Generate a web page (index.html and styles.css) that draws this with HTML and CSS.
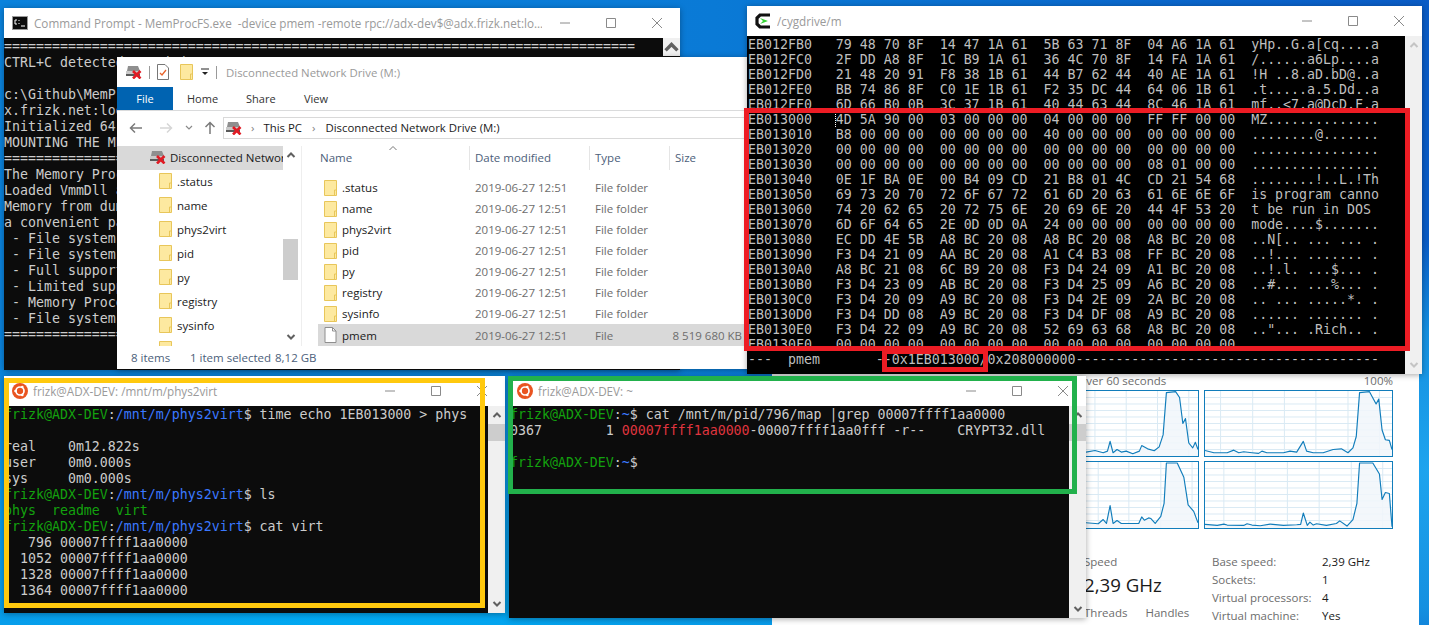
FILE: index.html
```html
<!DOCTYPE html>
<html lang="en">
<head>
<meta charset="utf-8">
<title>MemProcFS desktop</title>
<link rel="stylesheet" href="styles.css">
</head>
<body>
<svg class="defs" width="0" height="0" aria-hidden="true">
  <symbol id="i-min" viewBox="0 0 12 12"><path d="M1 6h10" stroke="#8a8a8a" fill="none"/></symbol>
  <symbol id="i-max" viewBox="0 0 12 12"><path d="M1.5 1.5h9v9h-9z" stroke="#8a8a8a" fill="none"/></symbol>
  <symbol id="i-close" viewBox="0 0 12 12"><path d="M1 1l10 10M11 1L1 11" stroke="#8a8a8a" fill="none"/></symbol>
  <symbol id="i-up" viewBox="0 0 10 8"><path d="M1.5 6L5 2.5 8.5 6" stroke="currentColor" stroke-width="2" fill="none"/></symbol>
  <symbol id="i-down" viewBox="0 0 10 8"><path d="M1.5 2L5 5.5 8.5 2" stroke="currentColor" stroke-width="2" fill="none"/></symbol>
  <symbol id="i-folder" viewBox="0 0 13 16"><path d="M.5.5h12v15H.5z" fill="#fde9a0" stroke="#e8c65a"/><path d="M10.5 15V10h2" fill="none" stroke="#e8c65a"/></symbol>
  <symbol id="i-file" viewBox="0 0 12 16"><path d="M.5.5h7.5l3.500 3.500v11.500H.5z" fill="#fff" stroke="#8e8e8e"/><path d="M8 .5V4h3.500" fill="none" stroke="#8e8e8e"/></symbol>
  <symbol id="i-drive" viewBox="0 0 16 14"><path d="M2 1h10l2 5H1z" fill="#8f8f8f"/><path d="M0 6h14v5H0z" fill="#c9c9c9"/><path d="M0 9h14v2H0z" fill="#5a5a5a"/><path d="M7 6l7.500 7.500M14.500 6L7 13.500" stroke="#e01b24" stroke-width="2.600" fill="none"/></symbol>
  <symbol id="i-ubuntu" viewBox="0 0 16 16"><circle cx="8" cy="8" r="8" fill="#e95420"/><circle cx="8" cy="8" r="4" fill="none" stroke="#fff" stroke-width="1.700"/><circle cx="3.500" cy="8" r="1.300" fill="#fff"/><circle cx="10.300" cy="4" r="1.300" fill="#fff"/><circle cx="10.300" cy="12" r="1.300" fill="#fff"/></symbol>
</svg>

<main class="desktop">

  <section class="win taskmgr">
    <div class="tm-head"><span>% Utilization over 60 seconds</span><span>100%</span></div>
    <div class="tm-charts">
      <svg class="chart" viewBox="-180 60 568 200" preserveAspectRatio="none">
        <path class="grid" d="M-180 80H388M-180 100H388M-180 120H388M-180 140H388M-180 160H388M-180 180H388M-180 200H388M-180 220H388M-180 240H388M75 60V260M170 60V260M265 60V260M360 60V260"/>
        <path class="fill" d="M-180 260V248L48 248 75 243 100 250 113 245 121 215 130 250 142 240 155 248 170 245 190 253 210 245 217 228 235 238 255 244 270 232 282 195 292 65 320 62 332 80 342 160 350 145 360 220 372 235 380 218 388 240V260Z"/>
        <path class="line" d="M-180 248L48 248 75 243 100 250 113 245 121 215 130 250 142 240 155 248 170 245 190 253 210 245 217 228 235 238 255 244 270 232 282 195 292 65 320 62 332 80 342 160 350 145 360 220 372 235 380 218 388 240"/>
      </svg>
      <svg class="chart" viewBox="403 60 565 200" preserveAspectRatio="none">
        <path class="grid" d="M403 80H968M403 100H968M403 120H968M403 140H968M403 160H968M403 180H968M403 200H968M403 220H968M403 240H968M450 60V260M547 60V260M643 60V260M738 60V260M835 60V260M930 60V260"/>
        <path class="fill" d="M403 260V243L430 250 470 250 490 242 505 250 520 247 545 250 565 252 575 245 590 250 640 250 660 245 680 248 700 215 710 245 730 250 760 250 790 240 815 238 835 250 850 235 860 200 870 65 900 62 920 100 928 85 938 180 948 210 960 212 968 240V260Z"/>
        <path class="line" d="M403 243L430 250 470 250 490 242 505 250 520 247 545 250 565 252 575 245 590 250 640 250 660 245 680 248 700 215 710 245 730 250 760 250 790 240 815 238 835 250 850 235 860 200 870 65 900 62 920 100 928 85 938 180 948 210 960 212 968 240"/>
      </svg>
      <svg class="chart chart-tall" viewBox="-180 273 568 203" preserveAspectRatio="none">
        <path class="grid" d="M-180 293H388M-180 313H388M-180 333H388M-180 353H388M-180 373H388M-180 393H388M-180 413H388M-180 433H388M-180 453H388M85 273V476M178 273V476M275 273V476M370 273V476"/>
        <path class="fill" d="M-180 476V460L48 460 85 463 100 450 110 462 121 407 130 462 142 453 155 462 208 462 217 442 225 452 238 445 245 447 258 462 275 440 285 400 292 276 325 276 345 320 358 405 375 425 388 460V476Z"/>
        <path class="line" d="M-180 460L48 460 85 463 100 450 110 462 121 407 130 462 142 453 155 462 208 462 217 442 225 452 238 445 245 447 258 462 275 440 285 400 292 276 325 276 345 320 358 405 375 425 388 460"/>
      </svg>
      <svg class="chart chart-tall" viewBox="403 273 565 203" preserveAspectRatio="none">
        <path class="grid" d="M403 293H968M403 313H968M403 333H968M403 353H968M403 373H968M403 393H968M403 413H968M403 433H968M403 453H968M460 273V476M555 273V476M652 273V476M748 273V476M845 273V476M940 273V476"/>
        <path class="fill" d="M403 476V465L440 468 460 464 470 467 520 468 530 463 545 467 570 469 600 464 640 468 680 466 692 465 700 430 712 468 720 458 730 467 740 463 770 468 800 462 810 454 832 470 850 450 862 400 870 276 910 276 930 310 938 388 948 367 960 370 968 472V476Z"/>
        <path class="line" d="M403 465L440 468 460 464 470 467 520 468 530 463 545 467 570 469 600 464 640 468 680 466 692 465 700 430 712 468 720 458 730 467 740 463 770 468 800 462 810 454 832 470 850 450 862 400 870 276 910 276 930 310 938 388 948 367 960 370 968 472"/>
      </svg>
    </div>
    <div class="tm-stats">
      <div class="tm-live">
        <div class="muted">Speed</div>
        <div class="tm-big">2,39 GHz</div>
        <div class="tm-pair muted"><span>Threads</span><span>Handles</span></div>
      </div>
      <dl class="tm-spec">
        <dt>Base speed:</dt><dd>2,39 GHz</dd>
        <dt>Sockets:</dt><dd>1</dd>
        <dt>Virtual processors:</dt><dd>4</dd>
        <dt>Virtual machine:</dt><dd>Yes</dd>
      </dl>
    </div>
  </section>

  <section class="win cmd">
    <header class="titlebar">
      <svg class="ticon" viewBox="0 0 16 14"><rect x=".5" y=".5" width="15" height="13" fill="#0c0c0c" stroke="#9a9a9a"/><path d="M3 4h2M3 4v4h2M7 4v1M7 7v1M9 10h4" stroke="#fff" fill="none"/></svg>
      <span class="ttitle">Command Prompt - MemProcFS.exe  -device pmem -remote rpc://adx-dev$@adx.frizk.net:lo...</span>
      <div class="controls">
        <svg><use href="#i-min"/></svg><svg><use href="#i-max"/></svg><svg><use href="#i-close"/></svg>
      </div>
    </header>
    <div class="termwrap">
<pre class="term cmd-text">===============================================================================
CTRL+C detected - exiting ...

c:\Github\MemProcFS\MemProcFS.exe -device pmem -remote rpc://adx-dev$@ad
x.frizk.net:logon
Initialized 64-bit Windows 10.0.17763
MOUNTING THE MEMORY AS M:
===============================================================================
The Memory Process File System
Loaded VmmDll and LeechCore
Memory from dump files or live
a convenient pattern
 - File system A
 - File system B
 - Full support
 - Limited support
 - Memory Process
 - File system C
===============================================================================</pre>
      <div class="sb sb-dark"><svg class="sb-arrow"><use href="#i-up"/></svg></div>
    </div>
  </section>

  <section class="win explorer">
    <header class="ex-title">
      <svg class="ex-drive"><use href="#i-drive"/></svg>
      <span class="ex-sep"></span>
      <svg class="ex-check" viewBox="0 0 12 16"><path d="M.5.5h7.500l3.500 3.500v11.500H.5z" fill="#fff" stroke="#777"/><path d="M3 9l2 2 4-5" stroke="#e8632a" stroke-width="1.300" fill="none"/></svg>
      <svg class="ex-qfolder"><use href="#i-folder"/></svg>
      <svg class="ex-drop" viewBox="0 0 8 8"><path d="M0 1h8" stroke="#222"/><path d="M1 4h6L4 7z" fill="#222"/></svg>
      <span class="ex-sep"></span>
      <span class="ex-name">Disconnected Network Drive (M:)</span>
    </header>
    <nav class="tabs">
      <span class="tab-file">File</span><span>Home</span><span>Share</span><span>View</span>
    </nav>
    <div class="addr">
      <svg class="nav-ico" viewBox="0 0 14 12"><path d="M13 6H2M6 1.500L1.500 6 6 10.500" stroke="#7a7a7a" stroke-width="1.500" fill="none"/></svg>
      <svg class="nav-ico" viewBox="0 0 14 12"><path d="M1 6h11M8 1.500L12.500 6 8 10.500" stroke="#d6d6d6" stroke-width="1.500" fill="none"/></svg>
      <svg class="nav-caret" viewBox="0 0 8 5"><path d="M1 1l3 3 3-3" stroke="#8a8a8a" stroke-width="1.200" fill="none"/></svg>
      <svg class="nav-ico nav-up" viewBox="0 0 12 14"><path d="M6 13V2M1.500 6L6 1.500 10.500 6" stroke="#7a7a7a" stroke-width="1.500" fill="none"/></svg>
      <div class="addr-box">
        <svg class="addr-drive"><use href="#i-drive"/></svg>
        <span class="chev">›</span><span>This PC</span><span class="chev chev-b">›</span><span>Disconnected Network Drive (M:)</span>
      </div>
    </div>
    <div class="ex-body">
      <div class="navpane">
        <div class="nav-row nav-root"><svg class="addr-drive"><use href="#i-drive"/></svg><span>Disconnected Network Drive (M:)</span></div>
        <div class="nav-row"><svg class="fld"><use href="#i-folder"/></svg><span>.status</span></div>
        <div class="nav-row"><svg class="fld"><use href="#i-folder"/></svg><span>name</span></div>
        <div class="nav-row"><svg class="fld"><use href="#i-folder"/></svg><span>phys2virt</span></div>
        <div class="nav-row"><svg class="fld"><use href="#i-folder"/></svg><span>pid</span></div>
        <div class="nav-row"><svg class="fld"><use href="#i-folder"/></svg><span>py</span></div>
        <div class="nav-row"><svg class="fld"><use href="#i-folder"/></svg><span>registry</span></div>
        <div class="nav-row"><svg class="fld"><use href="#i-folder"/></svg><span>sysinfo</span></div>
        <div class="nav-row"><svg class="fld"><use href="#i-folder"/></svg><span>shared folder</span></div>
      </div>
      <div class="sb sb-nav">
        <svg class="sb-arrow sb-arrow-dark"><use href="#i-up"/></svg>
        <div class="sb-track"><div class="sb-thumb"></div></div>
        <svg class="sb-arrow sb-arrow-dark"><use href="#i-down"/></svg>
      </div>
      <div class="list">
        <div class="list-head">
          <span class="lh-name">Name<svg class="sort" viewBox="0 0 8 4"><path d="M.5 4L4 .5 7.500 4" stroke="#777" fill="none"/></svg></span>
          <span class="lh-cell">Date modified</span><span class="lh-cell">Type</span><span class="lh-cell">Size</span>
        </div>
        <div class="row"><span class="r-name"><svg class="fld"><use href="#i-folder"/></svg>.status</span><span>2019-06-27 12:51</span><span>File folder</span><span></span></div>
        <div class="row"><span class="r-name"><svg class="fld"><use href="#i-folder"/></svg>name</span><span>2019-06-27 12:51</span><span>File folder</span><span></span></div>
        <div class="row"><span class="r-name"><svg class="fld"><use href="#i-folder"/></svg>phys2virt</span><span>2019-06-27 12:51</span><span>File folder</span><span></span></div>
        <div class="row"><span class="r-name"><svg class="fld"><use href="#i-folder"/></svg>pid</span><span>2019-06-27 12:51</span><span>File folder</span><span></span></div>
        <div class="row"><span class="r-name"><svg class="fld"><use href="#i-folder"/></svg>py</span><span>2019-06-27 12:51</span><span>File folder</span><span></span></div>
        <div class="row"><span class="r-name"><svg class="fld"><use href="#i-folder"/></svg>registry</span><span>2019-06-27 12:51</span><span>File folder</span><span></span></div>
        <div class="row"><span class="r-name"><svg class="fld"><use href="#i-folder"/></svg>sysinfo</span><span>2019-06-27 12:51</span><span>File folder</span><span></span></div>
        <div class="row row-sel"><span class="r-name"><svg class="fld"><use href="#i-file"/></svg>pmem</span><span>2019-06-27 12:51</span><span>File</span><span class="r-size">8 519 680 KB</span></div>
      </div>
    </div>
    <footer class="ex-status">
      <span class="st-a">8 items</span><span class="st-b">1 item selected</span><span class="st-c">8,12 GB</span>
    </footer>
  </section>

  <section class="win cyg">
    <header class="titlebar">
      <svg class="ticon cyg-ico" viewBox="0 0 16 16"><path d="M15 2H5L2 5v6l3 3h10" fill="none" stroke="#111" stroke-width="3.200"/><path d="M5 5l8 3-8 3 3-3z" fill="#35d435"/></svg>
      <span class="ttitle">/cygdrive/m</span>
      <div class="controls">
        <svg><use href="#i-min"/></svg><svg><use href="#i-max"/></svg><svg><use href="#i-close"/></svg>
      </div>
    </header>
    <div class="termwrap">
<pre class="hex">EB012FB0   79 48 70 8F  14 47 1A 61  5B 63 71 8F  04 A6 1A 61  yHp..G.a[cq....a
EB012FC0   2F DD A8 8F  1C B9 1A 61  36 4C 70 8F  14 FA 1A 61  /......a6Lp....a
EB012FD0   21 48 20 91  F8 38 1B 61  44 B7 62 44  40 AE 1A 61  !H ..8.aD.bD@..a
EB012FE0   BB 74 86 8F  C0 1E 1B 61  F2 35 DC 44  64 06 1B 61  .t.....a.5.Dd..a
EB012FF0   6D 66 B0 0B  3C 37 1B 61  40 44 63 44  8C 46 1A 61  mf..&lt;7.a@DcD.F.a
EB013000   <span class="cursor">4</span>D 5A 90 00  03 00 00 00  04 00 00 00  FF FF 00 00  MZ..............
EB013010   B8 00 00 00  00 00 00 00  40 00 00 00  00 00 00 00  ........@.......
EB013020   00 00 00 00  00 00 00 00  00 00 00 00  00 00 00 00  ................
EB013030   00 00 00 00  00 00 00 00  00 00 00 00  08 01 00 00  ................
EB013040   0E 1F BA 0E  00 B4 09 CD  21 B8 01 4C  CD 21 54 68  ........!..L.!Th
EB013050   69 73 20 70  72 6F 67 72  61 6D 20 63  61 6E 6E 6F  is program canno
EB013060   74 20 62 65  20 72 75 6E  20 69 6E 20  44 4F 53 20  t be run in DOS 
EB013070   6D 6F 64 65  2E 0D 0D 0A  24 00 00 00  00 00 00 00  mode....$.......
EB013080   EC DD 4E 5B  A8 BC 20 08  A8 BC 20 08  A8 BC 20 08  ..N[.. ... ... .
EB013090   F3 D4 21 09  AA BC 20 08  A1 C4 B3 08  FF BC 20 08  ..!... ....... .
EB0130A0   A8 BC 21 08  6C B9 20 08  F3 D4 24 09  A1 BC 20 08  ..!.l. ...$... .
EB0130B0   F3 D4 23 09  AB BC 20 08  F3 D4 25 09  A6 BC 20 08  ..#... ...%... .
EB0130C0   F3 D4 20 09  A9 BC 20 08  F3 D4 2E 09  2A BC 20 08  .. ... .....*. .
EB0130D0   F3 D4 DD 08  A9 BC 20 08  F3 D4 DF 08  A9 BC 20 08  ...... ....... .
EB0130E0   F3 D4 22 09  A9 BC 20 08  52 69 63 68  A8 BC 20 08  .."... .Rich.. .
EB0130F0   00 00 00 00  00 00 00 00  00 00 00 00  00 00 00 00  
---  pmem       --0x1EB013000/0x208000000--------------------------------------</pre>
      <div class="sb sb-light">
        <svg class="sb-arrow sb-arrow-pale"><use href="#i-up"/></svg>
        <div class="sb-track"></div>
        <svg class="sb-arrow sb-arrow-pale"><use href="#i-down"/></svg>
      </div>
    </div>
    <div class="frame frame-red-main"></div>
    <div class="frame frame-red-small"></div>
  </section>

  <section class="win ubu-a">
    <header class="titlebar">
      <svg class="ticon-u"><use href="#i-ubuntu"/></svg>
      <span class="ttitle">frizk@ADX-DEV: /mnt/m/phys2virt</span>
      <div class="controls">
        <svg><use href="#i-min"/></svg><svg><use href="#i-max"/></svg><svg><use href="#i-close"/></svg>
      </div>
    </header>
    <div class="termwrap">
<pre class="term"><span class="g">frizk@ADX-DEV</span>:<span class="b">/mnt/m/phys2virt</span>$ time echo 1EB013000 &gt; phys

real    0m12.822s
user    0m0.000s
sys     0m0.000s
<span class="g">frizk@ADX-DEV</span>:<span class="b">/mnt/m/phys2virt</span>$ ls
<span class="g">phys  readme  virt</span>
<span class="g">frizk@ADX-DEV</span>:<span class="b">/mnt/m/phys2virt</span>$ cat virt
   796 00007ffff1aa0000
  1052 00007ffff1aa0000
  1328 00007ffff1aa0000
  1364 00007ffff1aa0000</pre>
      <div class="sb sb-term">
        <svg class="sb-arrow sb-arrow-dark"><use href="#i-up"/></svg>
        <div class="sb-track"><div class="sb-thumb-top"></div></div>
        <svg class="sb-arrow sb-arrow-dark"><use href="#i-down"/></svg>
      </div>
    </div>
    <div class="frame frame-yellow"></div>
  </section>

  <section class="win ubu-b">
    <header class="titlebar">
      <svg class="ticon-u"><use href="#i-ubuntu"/></svg>
      <span class="ttitle">frizk@ADX-DEV: ~</span>
      <div class="controls">
        <svg><use href="#i-min"/></svg><svg><use href="#i-max"/></svg><svg><use href="#i-close"/></svg>
      </div>
    </header>
    <div class="termwrap">
<pre class="term term-b"><span class="g">frizk@ADX-DEV</span>:<span class="b">~</span>$ cat /mnt/m/pid/796/map |grep 00007ffff1aa0000
0367        1 <span class="r">00007ffff1aa0000</span>-00007ffff1aa0fff -r--    CRYPT32.dll

<span class="g">frizk@ADX-DEV</span>:<span class="b">~</span>$</pre>
      <div class="sb sb-term">
        <svg class="sb-arrow sb-arrow-dark"><use href="#i-up"/></svg>
        <div class="sb-track"><div class="sb-thumb-top"></div></div>
        <svg class="sb-arrow sb-arrow-dark"><use href="#i-down"/></svg>
      </div>
    </div>
    <div class="frame frame-green"></div>
  </section>

</main>
</body>
</html>
```

FILE: styles.css
```css
* { box-sizing: border-box; }
html, body { margin: 0; padding: 0; height: 100%; overflow: hidden; }
body { font-family: "Open Sans", "Noto Sans", sans-serif; font-size: 11.5px; }
.defs { position: absolute; }

.desktop {
  position: relative;
  width: 1429px;
  height: 625px;
  overflow: hidden;
  background:
    radial-gradient(ellipse 900px 320px at 350px 640px, #00aaf2 0%, #0a98e8 55%, rgba(10,130,224,0) 100%),
    radial-gradient(ellipse 200px 230px at 1429px 470px, #1ea4ee 0%, #1590e0 60%, rgba(21,144,224,0) 100%),
    linear-gradient(90deg, #0a82dc 0%, #0a7ad6 50%, #0a5cc6 100%);
}

.win {
  position: absolute;
  display: flex;
  flex-direction: column;
  background: #fff;
  box-shadow: 0 1px 6px rgba(0, 0, 0, .35);
}

.titlebar {
  flex: 0 0 30px;
  height: 30px;
  display: flex;
  align-items: center;
  color: #9a9a9a;
  font-size: 11.7px;
  white-space: pre;
}
.ticon { width: 16px; height: 14px; margin: 0 6px 0 8px; flex: none; }
.ticon-u { width: 16px; height: 16px; margin: 0 5px 0 8px; flex: none; }
.cyg-ico { height: 16px; }
.ttitle { flex: 1; overflow: hidden; }
.controls { display: flex; flex: none; }
.controls svg { width: 46px; height: 12px; }

.termwrap { flex: 1; display: flex; min-height: 0; }
.term, .hex {
  flex: 1;
  margin: 0;
  min-width: 0;
  overflow: hidden;
  background: #0c0c0c;
  color: #cccccc;
  font-family: "DejaVu Sans Mono", "Liberation Mono", monospace;
  font-size: 13.28px;
  line-height: 16px;
  padding-top: 1px;
}
.hex { background: #000; color: #bfbfbf; line-height: 15px; padding: 1px 0 0 1px; }
.term-b { padding-left: 1px; }
.cursor { border-left: 1px dotted #fff; margin-left: -1px; }
.g { color: #13a10e; }
.b { color: #3b78ff; }
.r { color: #e0353f; }

.sb { flex: 0 0 17px; width: 17px; display: flex; flex-direction: column; align-items: center; background: #f0f0f0; }
.sb-dark { background: #0c0c0c; border-left: 0; }
.sb-dark .sb-arrow { background: #f0f0f0; width: 17px; height: 18px; color: #606060; margin: 0; }
.sb-arrow { flex: none; width: 10px; height: 8px; margin: 5px 0; color: #606060; }
.sb-arrow-dark { color: #606060; }
.sb-arrow-pale { color: #c4c4c4; }
.sb-track { flex: 1; width: 100%; }
.sb-thumb { margin-top: 75px; height: 41px; background: #cdcdcd; }
.sb-thumb-top { height: 17px; background: #cdcdcd; }

.frame { position: absolute; pointer-events: none; border-style: solid; border-width: 5px; }
.frame-red-main { left: -3px; top: 102px; width: 666px; height: 243px; border-color: #ed1c24; }
.frame-red-small { left: 135px; top: 343px; width: 106px; height: 23px; border-color: #ed1c24; }
.frame-yellow { left: 0; top: 2px; width: 481px; height: 230px; border-color: #ffc90e; }
.frame-green { left: -1px; top: 0; width: 569px; height: 118px; border-color: #22b14c; }

/* windows on the desktop */
.taskmgr { left: 772px; top: 372px; width: 647px; height: 260px; box-shadow: none; padding-left: 238px; color: #1a1a1a; }
.cmd { left: 4px; top: 8px; width: 676px; height: 362px; }
.explorer { left: 117px; top: 57px; width: 636px; height: 312px; }
.cyg { left: 747px; top: 6px; width: 675px; height: 368px; }
.ubu-a { left: 4px; top: 376px; width: 501px; height: 237px; }
.ubu-b { left: 509px; top: 376px; width: 577px; height: 242px; }

/* task manager */
.tm-head { display: flex; justify-content: space-between; width: 383px; height: 18px; line-height: 18px; color: #6d6d6d; font-size: 11.5px; }
.tm-charts { display: grid; grid-template-columns: 189px 189px; grid-template-rows: 67px 68px; gap: 4px 5px; }
.chart { width: 100%; height: 100%; display: block; border: 1px solid #117dbb; background: #fff; }
.grid { stroke: #d9eaf4; stroke-width: 3; fill: none; }
.fill { fill: #f1f6fa; fill-opacity: .85; stroke: none; }
.line { stroke: #117dbb; stroke-width: 3.5; fill: none; stroke-linejoin: round; }
.tm-stats { display: flex; padding: 24px 0 0 74px; }
.tm-live { width: 128px; }
.muted { color: #6d6d6d; }
.tm-live > .muted:first-child { line-height: 18px; }
.tm-big { font-size: 18.7px; line-height: 27px; color: #1a1a1a; }
.tm-pair { display: flex; gap: 18px; line-height: 18px; margin-top: 6px; }
.tm-spec { margin: 0; display: grid; grid-template-columns: 110px auto; grid-auto-rows: 18px; line-height: 18px; }
.tm-spec dt { color: #6d6d6d; }
.tm-spec dd { margin: 0; color: #1a1a1a; }

/* explorer */
.ex-title { flex: 0 0 30px; display: flex; align-items: center; padding-left: 9px; }
.ex-drive { width: 16px; height: 14px; }
.ex-sep { width: 1px; height: 13px; background: #9a9a9a; margin: 0 7px 0 7px; }
.ex-check { width: 12px; height: 16px; }
.ex-qfolder { width: 13px; height: 16px; margin-left: 11px; }
.ex-drop { width: 8px; height: 8px; margin-left: 8px; }
.ex-name { color: #9a9a9a; font-size: 11.4px; margin-left: 2px; }
.tabs { flex: 0 0 24px; display: flex; align-items: center; gap: 0; border-bottom: 1px solid #dadbdc; font-size: 11px; color: #333; }
.tab-file { width: 56px; height: 23px; line-height: 23px; text-align: center; background: #0063b1; color: #fff; align-self: flex-start; }
.tabs span:nth-child(2) { margin-left: 14px; width: 59px; }
.tabs span:nth-child(3) { width: 58px; }
.addr { flex: 0 0 35px; display: flex; align-items: center; padding: 0 0 2px 12px; }
.nav-ico { width: 14px; height: 14px; margin-right: 16px; flex: none; }
.nav-up { margin-right: 6px; }
.nav-caret { width: 8px; height: 5px; margin: 0 10px 0 -4px; flex: none; }
.addr-box { flex: 1; height: 22px; display: flex; align-items: center; gap: 9px; padding-left: 2px; border: 1px solid #d9d9d9; color: #1a1a1a; font-size: 11.4px; white-space: nowrap; }
.addr-drive { width: 16px; height: 14px; flex: none; }
.chev { color: #808080; }
.chev-b { margin: 0 1px; }
.ex-body { flex: 0 0 200px; height: 200px; display: flex; overflow: hidden; }
.navpane { flex: 0 0 166px; width: 166px; overflow: hidden; color: #1a1a1a; }
.nav-row { height: 24px; display: flex; align-items: center; gap: 5px; padding: 0 0 2px 42px; white-space: nowrap; overflow: hidden; }
.nav-root { padding-left: 33px; gap: 4px; background: #d9d9d9; }
.fld { width: 13px; height: 16px; flex: none; }
.sb-nav { flex: 0 0 15px; width: 15px; background: #fff; }
.list { flex: 1; margin-left: 3px; padding-left: 16px; border-left: 1px solid #eee; min-width: 0; }
.list-head { height: 31px; display: grid; grid-template-columns: 151px 120px 80px 1fr; color: #4c607a; align-items: start; }
.lh-name { position: relative; padding: 4px 0 0 2px; height: 24px; line-height: 16px; }
.lh-cell { border-left: 1px solid #e5e5e5; padding: 4px 0 0 5px; height: 24px; line-height: 16px; }
.sort { position: absolute; left: 71px; top: 0; width: 8px; height: 4px; }
.row { height: 21px; display: grid; grid-template-columns: 151px 120px 80px 73px; align-items: center; color: #6d6d6d; }
.row > span:nth-child(2), .row > span:nth-child(3) { padding-left: 6px; }
.r-name { display: flex; align-items: center; gap: 5px; padding-left: 6px; color: #1a1a1a; }
.r-size { text-align: right; white-space: nowrap; }
.row-sel { background: #d9d9d9; height: 22px; }
.ex-status { flex: 1; display: flex; align-items: center; color: #4c607a; }
.st-a { margin-left: 14px; width: 59px; }
.st-b { width: 85px; }
```
